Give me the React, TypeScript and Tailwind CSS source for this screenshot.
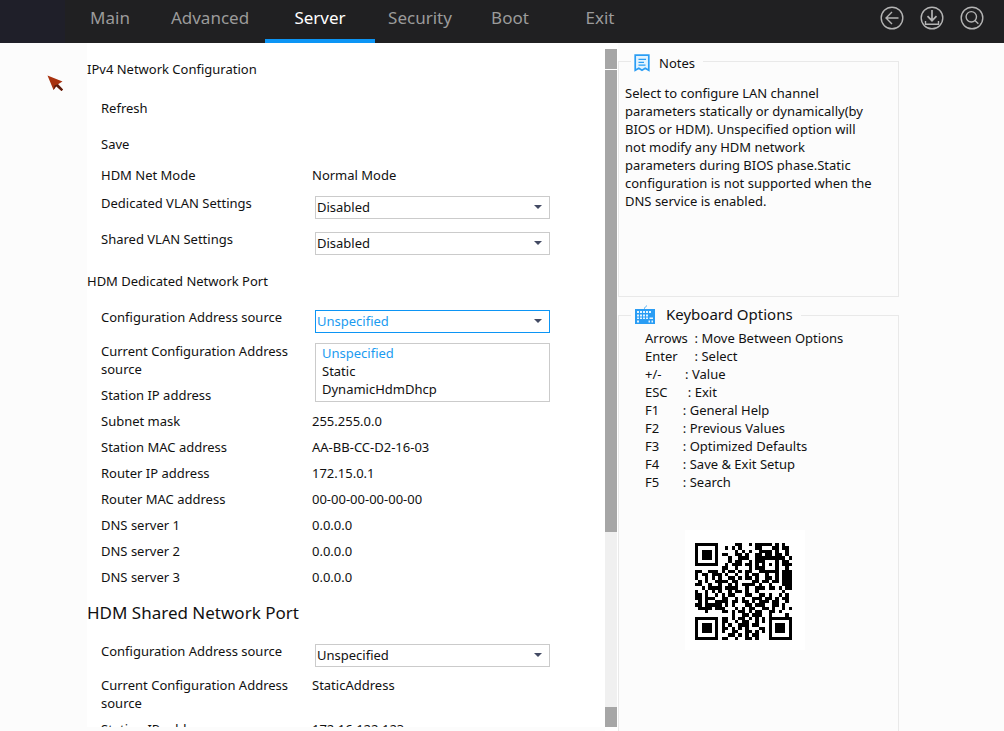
import { useState } from "react";
import type { ReactNode } from "react";

const TABS = [
  { name: "Main", width: "w-[90px]" },
  { name: "Advanced", width: "w-[110px]" },
  { name: "Server", width: "w-[110px]" },
  { name: "Security", width: "w-[90px]" },
  { name: "Boot", width: "w-[90px]" },
  { name: "Exit", width: "w-[90px]" },
];

const KEYS = [
  "Arrows  : Move Between Options",
  "Enter     : Select",
  "+/-       : Value",
  "ESC      : Exit",
  "F1       : General Help",
  "F2       : Previous Values",
  "F3       : Optimized Defaults",
  "F4       : Save & Exit Setup",
  "F5       : Search",
];

const ADDRESS_SOURCES = ["Unspecified", "Static", "DynamicHdmDhcp"];

const QR_ROWS = [
  "#######.....##..#.#####.#.#..",
  "#.....#..#.#.#....##...##.##.",
  "#.###.#.....#.#.#..####.#..#.",
  "#.###.#.##..##.#..##.##.##.#.",
  "#.###.#...#..###..#########.#",
  "#.....#...#.##..#.###...#.##.",
  "#######..#.###.##.#.#.#.#.###",
  "........##..#...#.###...#..#.",
  "##..###.#.##.#.##..######.###",
  "#.##.###.#..#..#.##..#..#.###",
  "#..#.#.#..##.#.##.#..##.#.###",
  ".#.#..####.##....##.##.##.###",
  "##..#..#..#.#.####.#..#...###",
  "..#.####.####..#..###.##.#.##",
  "#..#.#.#..#.##.#..#.......#..",
  "##.#..#.#.##...##..##.#..#.#.",
  "##.###..##..#.#..###.##.#.##.",
  ".#.#..####.##.##.#.###.##..#.",
  "##.#####.#.#...##.###..##.#..",
  ".####.###...#.#.##..##.#..#.#",
  "...#....##.#.##.#.##..##.#...",
  "...........#..##.###..#....#.",
  "#######.##.#.##.#.#.#.#######",
  "#.....#.##..#.##..#.#.#.....#",
  "#.###.#.#.#..###.##...#.###.#",
  "#.###.#.##.#.#.#...##.#.###.#",
  "#.###.#.#..##..##.#.#.#.###.#",
  "#.....#...##.#.#.##...#.....#",
  "#######.##..#..##.#...#######",
];

function QrCode() {
  const path = QR_ROWS.map((row, y) =>
    [...row].map((c, x) => (c === "#" ? `M${x} ${y}h1v1h-1z` : "")).join("")
  ).join("");
  return (
    <div className="size-[120px] bg-white pt-[13px] pl-2.5">
      <svg width="97" height="97" viewBox="0 0 29 29" shapeRendering="crispEdges" role="img" aria-label="QR code">
        <path d={path} fill="#000" />
      </svg>
    </div>
  );
}

function CircleIcon({ label, children }: { label: string; children: ReactNode }) {
  return (
    <button type="button" aria-label={label} className="text-[#b4b4b4]">
      <svg width="24" height="24" viewBox="0 0 24 24" fill="none" stroke="currentColor" strokeWidth="1.4">
        <circle cx="12" cy="12" r="10.800" />
        {children}
      </svg>
    </button>
  );
}

function NotesIcon() {
  return (
    <svg width="16" height="18" viewBox="0 0 16 18" fill="none" stroke="#2a9df4" strokeWidth="1.7">
      <path d="M1.2 1.2h13.6v15l-3.6-2-3.2 2-3.2-2-3.6 2z" fill="#e3f4ff" />
      <path d="M4.500 5.300h7.500M4.500 8.300h5.500M4.500 11.200h7" strokeWidth="1.3" />
    </svg>
  );
}

function KeyboardIcon() {
  return (
    <svg width="22" height="20" viewBox="0 0 22 20">
      <path d="M10.500 5V3.200q0-1 1-1.200T12.500 .5" fill="none" stroke="#5bb5f7" />
      <rect x="1" y="4" width="20" height="15" fill="#8fd0fb" />
      <rect x="1.500" y="4.500" width="19" height="14" fill="#2a9df4" stroke="#2a9df4" />
      <path
        d="M3 6h2v2H3zM6 6h2v2H6zM9 6h2v2H9zM12 6h2v2h-2zM15 6h2v2h-2zM3 9.500h2v2H3zM6 9.500h2v2H6zM9 9.500h2v2H9zM12 9.500h2v2h-2zM3 12.500h2v1.500H3zM6 12.500h2v1.500H6zM9 12.500h2v1.500H9zM12 12.500h2v1.500h-2zM15.500 12.500h3.500v1.500h-3.500zM3 15.500h2v2H3zM14.500 15.500h1.500v2h-1.500zM17.500 15.500h1.500v2h-1.500z"
        fill="#e3f4ff"
      />
    </svg>
  );
}

function Caret() {
  return (
    <svg width="8" height="4" viewBox="0 0 8 4" className="pointer-events-none">
      <path d="M0 0h8L4 4z" fill="#434a63" />
    </svg>
  );
}

function Select({ id, options }: { id: string; options: string[] }) {
  return (
    <div className="ml-[3px] grid w-[235px] items-center">
      <select
        id={id}
        className="col-start-1 row-start-1 h-[23px] w-full appearance-none border border-[#cbcbcb] bg-white pb-0.5 pl-px leading-[18px] outline-none"
      >
        {options.map((o) => (
          <option key={o}>{o}</option>
        ))}
      </select>
      <span className="pointer-events-none col-start-1 row-start-1 flex justify-self-end pr-2 pb-px">
        <Caret />
      </span>
    </div>
  );
}

function OpenSelect({ id }: { id: string }) {
  const [value, setValue] = useState("Unspecified");
  return (
    <div className="relative ml-[3px] w-[235px]">
      <button
        id={id}
        type="button"
        aria-haspopup="listbox"
        aria-expanded="true"
        className="flex h-[23px] w-full items-center justify-between border border-[#0c95f5] bg-white pr-[7px] pb-0.5 pl-px text-[#1b9bf0]"
      >
        {value}
        <Caret />
      </button>
      <ul role="listbox" className="absolute top-[33px] left-0 w-full border border-[#cbcbcb] bg-white pb-[3px]">
        {ADDRESS_SOURCES.map((o) => (
          <li
            key={o}
            role="option"
            aria-selected={o === value}
            onClick={() => setValue(o)}
            className="px-1.5 aria-selected:text-[#1b9bf0]"
          >
            {o}
          </li>
        ))}
      </ul>
    </div>
  );
}

function InfoRow({ label, value }: { label: string; value?: string }) {
  return (
    <div className="grid grid-cols-[211px_1fr] py-1 pl-3.5">
      <span className="pr-3">{label}</span>
      <span>{value}</span>
    </div>
  );
}

function ControlRow({ id, label, children }: { id: string; label: string; children: ReactNode }) {
  return (
    <div className="grid h-9 grid-cols-[211px_1fr] items-start pl-3.5">
      <label htmlFor={id} className="pt-1.5">
        {label}
      </label>
      <div className="pt-2">{children}</div>
    </div>
  );
}

function Panel({ icon, title, titleClass, className, children }: {
  icon: ReactNode;
  title: string;
  titleClass: string;
  className: string;
  children: ReactNode;
}) {
  return (
    <fieldset className={`min-w-0 border border-[#e9e9e9] ${className}`}>
      <legend className="ml-3 flex h-6 items-center pr-2 pl-[3px]">
        {icon}
        <span className={titleClass}>{title}</span>
      </legend>
      {children}
    </fieldset>
  );
}

export default function App() {
  return (
    <div className="flex h-screen flex-col overflow-hidden bg-[#fcfcfc] font-['Noto_Sans',sans-serif] text-[13px] leading-[18px] text-[#111]">
      <header className="flex h-[43px] shrink-0 bg-[#202022]">
        <div className="w-[65px] bg-[#1f1f29]" />
        <nav className="flex text-[17px] leading-6">
          {TABS.map((t) => (
            <a
              key={t.name}
              href={`#${t.name.toLowerCase()}`}
              aria-current={t.name === "Server" ? "page" : undefined}
              className={`${t.width} border-b-4 border-transparent pt-1.5 text-center text-[#9b9b9b] aria-[current=page]:border-[#0c95f5] aria-[current=page]:text-white`}
            >
              {t.name}
            </a>
          ))}
        </nav>
        <div className="ml-auto flex items-center gap-4 pr-5 pb-[7px]">
          <CircleIcon label="Back">
            <path d="M18.500 12H6M12 6l-6 6 6 6" />
          </CircleIcon>
          <CircleIcon label="Save">
            <path d="M12 4v10.500M7.500 10.200l4.500 4.500 4.500-4.500" strokeWidth="1.700" />
            <path d="M5.500 15v3.200h13V15" />
          </CircleIcon>
          <CircleIcon label="Search">
            <circle cx="11.300" cy="10.800" r="5.200" />
            <path d="M15 14.500l3.300 3.300" />
          </CircleIcon>
        </div>
      </header>

      <div className="flex min-h-0 flex-1">
        <div className="w-[87px] shrink-0" />
        <main className="mb-1 min-w-0 flex-1 overflow-hidden bg-white pt-[17px]">
          <h1>IPv4 Network Configuration</h1>
          <div className="mt-3 flex flex-col items-start pl-3.5">
            <button type="button" className="h-9">Refresh</button>
            <button type="button" className="h-9">Save</button>
          </div>
          <InfoRow label="HDM Net Mode" value="Normal Mode" />
          <ControlRow id="dedicated-vlan" label="Dedicated VLAN Settings">
            <Select id="dedicated-vlan" options={["Disabled", "Enabled"]} />
          </ControlRow>
          <ControlRow id="shared-vlan" label="Shared VLAN Settings">
            <Select id="shared-vlan" options={["Disabled", "Enabled"]} />
          </ControlRow>

          <h2 className="my-3">HDM Dedicated Network Port</h2>
          <ControlRow id="dedicated-source" label="Configuration Address source">
            <OpenSelect id="dedicated-source" />
          </ControlRow>
          <InfoRow label="Current Configuration Address source" />
          <InfoRow label="Station IP address" />
          <InfoRow label="Subnet mask" value="255.255.0.0" />
          <InfoRow label="Station MAC address" value="AA-BB-CC-D2-16-03" />
          <InfoRow label="Router IP address" value="172.15.0.1" />
          <InfoRow label="Router MAC address" value="00-00-00-00-00-00" />
          <InfoRow label="DNS server 1" value="0.0.0.0" />
          <InfoRow label="DNS server 2" value="0.0.0.0" />
          <InfoRow label="DNS server 3" value="0.0.0.0" />

          <h2 className="my-3 text-[17px] leading-[22px]">HDM Shared Network Port</h2>
          <ControlRow id="shared-source" label="Configuration Address source">
            <Select id="shared-source" options={ADDRESS_SOURCES} />
          </ControlRow>
          <InfoRow label="Current Configuration Address source" value="StaticAddress" />
          <InfoRow label="Station IP address" value="172.16.122.123" />
        </main>

        <div className="flex w-[13px] shrink-0 flex-col bg-white pt-1.5 pr-px pb-1">
          <div className="h-5 bg-[#a6a6a6]" />
          <div className="mt-px flex flex-1 flex-col bg-[#f0f0f0]">
            <div className="h-[72.5%] bg-[#a6a6a6]" />
          </div>
          <div className="h-5 bg-[#a6a6a6]" />
        </div>

        <aside className="mr-[105px] flex w-[281px] shrink-0 flex-col gap-1.5 pt-1.5">
          <Panel
            icon={<span className="pt-1"><NotesIcon /></span>}
            title="Notes"
            titleClass="pt-1 pl-[9px]"
            className="min-h-[248px]"
          >
            <p className="pt-[11px] pr-6 pl-1.5">
              Select to configure LAN channel parameters statically or dynamically(by BIOS or HDM). Unspecified option
              will not modify any HDM network parameters during BIOS phase.Static configuration is not supported when
              the DNS service is enabled.
            </p>
          </Panel>
          <Panel
            icon={<KeyboardIcon />}
            title="Keyboard Options"
            titleClass="pb-0.5 pl-2.5 text-[15px]"
            className="min-h-[440px]"
          >
            <ul className="pt-0.5 pl-[26px] whitespace-pre">
              {KEYS.map((k) => (
                <li key={k}>{k}</li>
              ))}
            </ul>
            <div className="mt-[39px] pl-[66px]">
              <QrCode />
            </div>
          </Panel>
        </aside>
      </div>

      <svg className="pointer-events-none absolute top-[75px] left-[47px]" width="17" height="17" viewBox="0 0 17 17">
        <path d="M.5 .5L15.500 6.500l-4.500 2.700 5 5.300-1.500 1.500-5.300-4.800L6.500 15z" fill="#a8320f" />
        <path d="M11 9.200l5 5.300-1.500 1.500-5.300-4.800L6.500 15l1-4.500z" fill="#5c1d0e" />
      </svg>
    </div>
  );
}
